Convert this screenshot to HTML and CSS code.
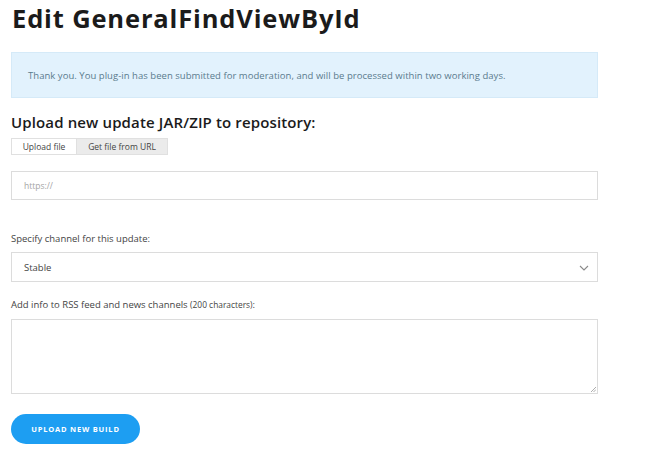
FILE: index.html
```html
<!DOCTYPE html>
<html>
<head>
<meta charset="utf-8">
<link rel="stylesheet" href="styles.css">
</head>
<body>
<main class="page">
  <h1 class="title">Edit GeneralFindViewById</h1>
  <div class="alert">Thank you. You plug-in has been submitted for moderation, and will be processed within two working days.</div>
  <h2 class="section">Upload new update JAR/ZIP to repository:</h2>
  <div class="tabs">
    <span class="tab tab-active">Upload file</span>
    <span class="tab tab-grey">Get file from URL</span>
  </div>
  <div class="field url-field"><span class="placeholder">https://</span></div>
  <label class="label first-label">Specify channel for this update:</label>
  <div class="field select-field">
    <span class="select-value">Stable</span>
    <svg class="chevron" width="10" height="6" viewBox="0 0 10 6"><path d="M1 1 L5 5 L9 1" fill="none" stroke="#8a8a8a" stroke-width="1.1"/></svg>
  </div>
  <label class="label second-label">Add info to RSS feed and news channels <small class="hint">(200 characters)</small>:</label>
  <div class="field textarea-field">
    <svg class="grip" width="6" height="6" viewBox="0 0 6 6"><path d="M6 1 L1 6 M6 3.5 L3.5 6" stroke="#999" stroke-width="0.8"/></svg>
  </div>
  <button class="btn">UPLOAD NEW BUILD</button>
</main>
</body>
</html>
```
FILE: styles.css
```css
html, body { margin: 0; padding: 0; background: #fff; }
body { font-family: "Open Sans", "Liberation Sans", sans-serif; color: #444; }
.page { width: 587px; padding: 0 11px; display: flex; flex-direction: column; align-items: flex-start; }
.title { margin: 3px 0 0 1px; font-size: 25.5px; line-height: 30px; font-weight: 700; color: #1b1b1b; letter-spacing: 0.85px; }
.alert { box-sizing: border-box; width: 587px; height: 46px; margin-top: 19px; background: #e2f2fd; border: 1px solid #d5eaf8; display: flex; align-items: center; padding-left: 16px; font-size: 9.5px; color: #5a7b8d; letter-spacing: 0.04px; }
.section { margin: 15px 0 0; font-size: 15px; line-height: 18px; font-weight: 600; color: #1b1b1b; letter-spacing: 0.13px; }
.tabs { display: flex; margin-top: 7px; height: 17px; }
.tab { box-sizing: border-box; height: 17px; display: flex; align-items: center; justify-content: center; font-size: 8.5px; color: #444; border: 1px solid #e0e0e0; }
.tab-active { width: 66px; background: #fff; }
.tab-grey { width: 91px; background: #ebebeb; border-left: none; }
.field { box-sizing: border-box; width: 587px; border: 1px solid #dcdcdc; background: #fff; display: flex; align-items: center; padding-left: 12px; position: relative; }
.url-field { height: 29px; margin-top: 16px; }
.placeholder { font-size: 8.5px; color: #a5a5a5; }
.label { display: block; font-size: 9.5px; line-height: 14px; color: #444; }
.first-label { margin-top: 32px; }
.select-field { height: 30px; margin-top: 6px; }
.select-value { font-size: 9.5px; color: #444; }
.chevron { position: absolute; right: 8px; top: 12px; }
.second-label { margin-top: 16px; }
.hint { font-size: 8.4px; }
.textarea-field { height: 75px; margin-top: 7px; }
.grip { position: absolute; right: 1px; bottom: 1px; }
.btn { margin-top: 20px; width: 129px; height: 30px; border: none; border-radius: 15px; background: #1d9ef2; color: #fff; font-family: "Open Sans", sans-serif; font-weight: 700; font-size: 7.5px; letter-spacing: 0.8px; padding: 0; }
```
